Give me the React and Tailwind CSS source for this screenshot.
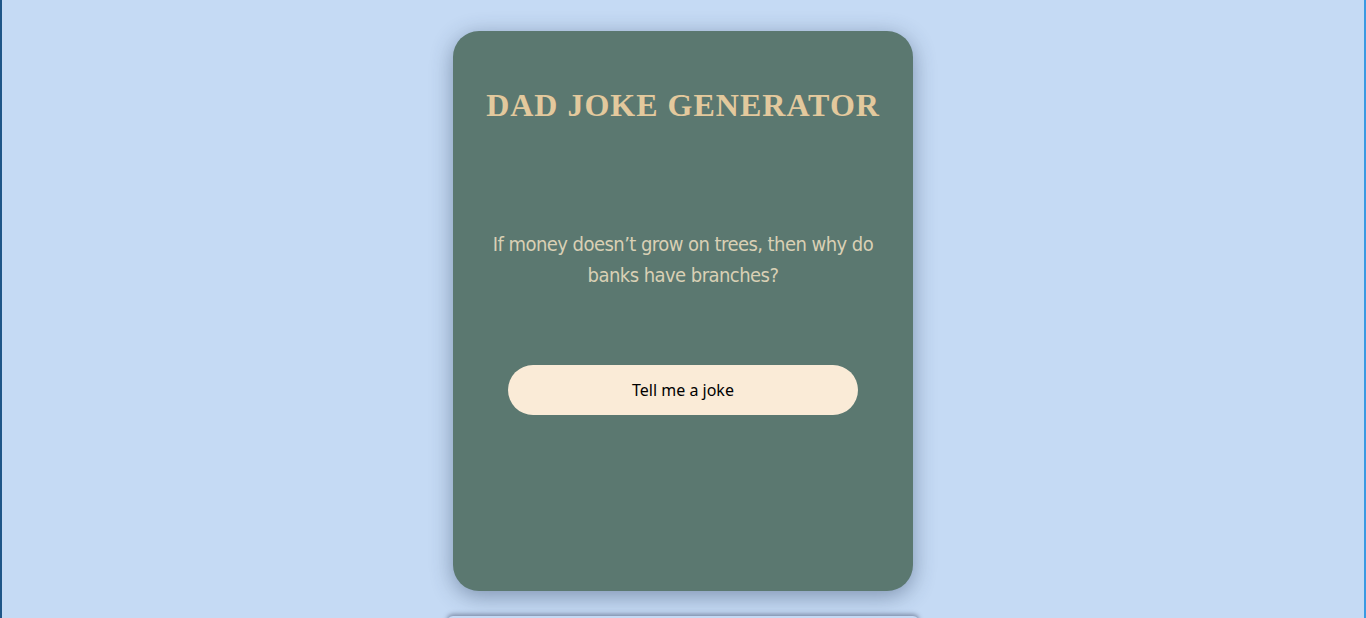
import React from 'react';

function App() {
  return (
    <div className="min-h-[618px] bg-[#c5daf4] border-l-2 border-l-[#1f5688] border-r-2 border-r-[#3a9ae2] flex flex-col items-center pt-[31px] overflow-hidden h-[618px]">
      <div className="w-[460px] h-[560px] shrink-0 rounded-[26px] bg-[#5b7870] shadow-[0_5px_22px_rgba(40,60,90,0.45)] flex flex-col items-center">
        <h1 className="mt-[54px] text-[32px] leading-[40px] font-bold tracking-[1px] text-[#e3c99d] font-['Liberation_Serif',serif]">
          DAD JOKE GENERATOR
        </h1>
        <p className="mt-[104px] w-[400px] text-center text-[20px] leading-[31px] tracking-[-0.55px] text-[#d9d0b5] font-['DejaVu_Sans_Condensed',sans-serif] [font-stretch:condensed]">
          If money doesn’t grow on trees, then why do banks have branches?
        </p>
        <button className="mt-[74px] w-[350px] h-[50px] rounded-full bg-[#faebd7] text-black text-[16px] font-['Noto_Sans',sans-serif]">
          Tell me a joke
        </button>
      </div>
      <div className="mt-[25px] w-[472px] h-[40px] shrink-0 rounded-t-[6px] bg-[#c5daf4] shadow-[0_-2px_4px_rgba(60,70,100,0.5)]"></div>
    </div>
  );
}

export default App;
